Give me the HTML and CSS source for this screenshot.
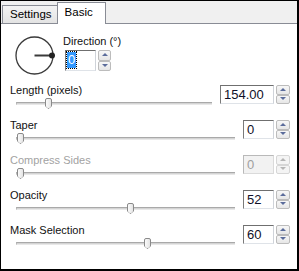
FILE: index.html
```html
<!DOCTYPE html>
<html>
<head>
<meta charset="utf-8">
<link rel="stylesheet" href="styles.css">
</head>
<body>
<div class="window">
  <div class="tabs">
    <div class="tab">Settings</div>
    <div class="tab active">Basic</div>
  </div>
  <div class="page">
    <div class="dir-row">
      <svg class="dial" width="40" height="40" viewBox="0 0 40 40">
        <circle cx="19.5" cy="19.5" r="18.5" fill="none" stroke="#3a3a3a" stroke-width="1.3"/>
        <line x1="19.5" y1="19.5" x2="37" y2="19.5" stroke="#3a3a3a" stroke-width="2"/>
        <circle cx="37" cy="19.5" r="3" fill="#222"/>
      </svg>
      <div class="dir">
        <div class="label">Direction (°)</div>
        <div class="spin dirspin">
          <div class="input w-dir"><span class="sel">0</span></div>
          <div class="updown"><div class="btn up"></div><div class="btn down"></div></div>
        </div>
      </div>
    </div>

    <div class="row">
      <div class="label">Length (pixels)</div>
      <div class="slider"><div class="track"></div><div class="thumb" style="left:29px"></div></div>
      <div class="spin">
        <div class="input w-long">154.00</div>
        <div class="updown"><div class="btn up"></div><div class="btn down"></div></div>
      </div>
    </div>

    <div class="row">
      <div class="label">Taper</div>
      <div class="slider"><div class="track"></div><div class="thumb" style="left:1px"></div></div>
      <div class="spin">
        <div class="input w-short">0</div>
        <div class="updown"><div class="btn up"></div><div class="btn down"></div></div>
      </div>
    </div>

    <div class="row disabled">
      <div class="label">Compress Sides</div>
      <div class="slider"><div class="track"></div><div class="thumb" style="left:1px"></div></div>
      <div class="spin">
        <div class="input w-short">0</div>
        <div class="updown"><div class="btn up"></div><div class="btn down"></div></div>
      </div>
    </div>

    <div class="row">
      <div class="label">Opacity</div>
      <div class="slider"><div class="track"></div><div class="thumb" style="left:111px"></div></div>
      <div class="spin">
        <div class="input w-short">52</div>
        <div class="updown"><div class="btn up"></div><div class="btn down"></div></div>
      </div>
    </div>

    <div class="row">
      <div class="label">Mask Selection</div>
      <div class="slider"><div class="track"></div><div class="thumb" style="left:128px"></div></div>
      <div class="spin">
        <div class="input w-short">60</div>
        <div class="updown"><div class="btn up"></div><div class="btn down"></div></div>
      </div>
    </div>
  </div>
</div>
</body>
</html>
```
FILE: styles.css
```css
* { box-sizing: border-box; }
html, body { margin: 0; padding: 0; background: #fff; }
body { font-family: "Liberation Sans", Arial, sans-serif; font-size: 11px; color: #111; }

.window {
  width: 299px;
  height: 271px;
  border-top: 1px solid #000;
  border-left: 1px solid #000;
  border-right: 2px solid #000;
  border-bottom: 2px solid #000;
  display: flex;
  flex-direction: column;
  background: #fff;
}

.tabs {
  height: 23px;
  background: #f0f0f0;
  border-bottom: 1px solid #898c95;
  display: flex;
  align-items: flex-end;
  padding-left: 1px;
  flex: none;
}
.tab {
  height: 18px;
  line-height: 16px;
  padding: 0 5px 0 7px;
  border: 1px solid #898c95;
  border-bottom: none;
  background: linear-gradient(#f3f3f3, #ebebeb 50%, #e3e3e3);
  color: #000;
  font-size: 11.5px;
}
.tab.active {
  height: 22px;
  margin-bottom: -1px;
  margin-left: -1px;
  background: #fff;
  line-height: 18px;
  padding: 0 12px 0 7px;
  position: relative;
}

.page {
  flex: 1;
  background: #fff;
}

.dir-row {
  height: 60px;
  display: flex;
  padding-left: 14px;
}
.dial { margin-top: 12px; flex: none; }
.dir { margin-left: 8px; padding-top: 11px; }
.dir .label { height: 14px; }
.dirspin { margin-left: 2px; margin-top: 1px; }

.row {
  height: 35px;
  display: grid;
  grid-template-columns: 1fr auto;
  grid-template-rows: 13px 14px;
  column-gap: 8px;
  padding-left: 9px;
  padding-right: 7px;
}
.row .label { grid-column: 1; grid-row: 1; line-height: 13px; }
.row .slider { grid-column: 1; grid-row: 2; }
.row .spin { grid-column: 2; grid-row: 1 / span 2; margin-top: 1px; align-self: start; }

.label { line-height: 13px; white-space: nowrap; }

.slider {
  position: relative;
  margin-left: 6px;
  height: 14px;
}
.track {
  position: absolute;
  left: 0; right: 0;
  top: 5px;
  height: 3px;
  border-top: 1px solid #a9a9a9;
  border-left: 1px solid #b8b8b8;
  border-bottom: 1px solid #e8e8e8;
  background: #d4d4d4;
}
.thumb {
  position: absolute;
  top: 1px;
  width: 7px;
  height: 11px;
  border: 1px solid #8a8a8a;
  border-radius: 2px 2px 3px 3px;
  background: linear-gradient(90deg, #fbfbfb, #e4e4e4);
  clip-path: polygon(0 0, 100% 0, 100% 75%, 50% 100%, 0 75%);
}

.spin { display: flex; gap: 2px; }
.input {
  height: 19px;
  border: 1px solid;
  border-color: #6f6f6f #cfd3d9 #dfe3e8 #7a7a7a;
  background: #fff;
  font-size: 13px;
  line-height: 17px;
  padding-left: 3px;
  color: #101028;
}
.w-long { width: 54px; }
.w-short { width: 31px; }
.w-dir { width: 31px; height: 21px; padding: 1px 0 0 1px; line-height: 16px; }
.sel {
  display: inline-block;
  background: #3399ff;
  color: #fff;
  padding: 0 1px;
  outline: 1px dotted #000;
  line-height: 16px;
}

.updown {
  width: 14px;
  display: flex;
  flex-direction: column;
}
.dirspin .updown { width: 13px; }
.btn {
  flex: 1;
  border: 1px solid #bcbcbc;
  border-radius: 2px;
  background: linear-gradient(#f7f7f7, #e6e6e6);
  position: relative;
}
.btn::after {
  content: "";
  position: absolute;
  left: 50%;
  top: 50%;
  margin-left: -3px;
  margin-top: -2px;
  border-left: 3px solid transparent;
  border-right: 3px solid transparent;
}
.btn.up::after { border-bottom: 3px solid #5b6c9b; }
.btn.down::after { border-top: 3px solid #5b6c9b; }

.disabled .label { color: #a2a2a2; }
.disabled .input {
  background: #f2f2f2;
  border-color: #b9b9b9 #dadada #dadada #b9b9b9;
  color: #a0a0a0;
}
.disabled .btn { border-color: #d6d6d6; background: #f4f4f4; }
.disabled .btn.up::after { border-bottom-color: #b5b5b5; }
.disabled .btn.down::after { border-top-color: #b5b5b5; }
```
